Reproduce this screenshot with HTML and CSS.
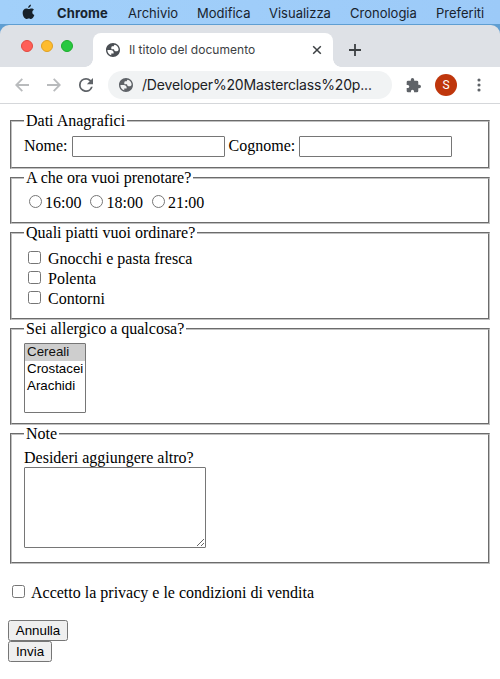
FILE: index.html
```html
<!DOCTYPE html>
<html lang="it">
<head>
<meta charset="utf-8">
<title>Il titolo del documento</title>
<link rel="stylesheet" href="styles.css">
</head>
<body>
<svg class="defs" width="0" height="0">
  <symbol id="globe" viewBox="0 0 24 24"><path d="M12 2C6.480 2 2 6.480 2 12s4.480 10 10 10 10-4.480 10-10S17.520 2 12 2zM4 12h4.400c3.400.020 4.900 1.730 4.500 5.140H9.500v2.480A8 8 0 0 1 4 12zm16 0c-.7 1.300-1.700 1.900-3.100 1.900-2.300 0-3.400-1-3.400-2.900h-3.900V8.500c0-1.300.8-2 2.300-2h1.200c0-1 .5-1.700 1.500-2.100A8 8 0 0 1 20 12z"/></symbol>
</svg>
<nav class="menubar">
  <svg class="apple" viewBox="0 0 14 17"><path d="M9.700.5c.1 1.900-1.300 3.500-3 3.600C6.500 2.400 8 .7 9.700.5zM12.900 6c-1.200.7-1.800 1.500-1.800 2.800 0 1.500.9 2.500 2.200 3-.8 2.200-2 4.200-3.500 4.200-.9 0-1.400-.6-2.500-.6s-1.700.6-2.500.6C2.600 16 .7 12.500.7 9.400c0-3 1.800-4.800 4-4.800 1 0 1.900.7 2.700.7.700 0 1.700-.7 2.900-.7 1 0 2 .5 2.600 1.400z"/></svg>
  <b class="m-chrome">Chrome</b><span class="m-archivio">Archivio</span><span class="m-modifica">Modifica</span><span class="m-visualizza">Visualizza</span><span class="m-cronologia">Cronologia</span><span class="m-preferiti">Preferiti</span>
</nav>
<div class="backdrop">
  <header class="tabstrip">
    <div class="lights"><i class="red"></i><i class="yellow"></i><i class="green"></i></div>
    <div class="tab">
      <svg class="favicon" viewBox="2 2 20 20"><use href="#globe" width="24" height="24"/></svg>
      <span class="tab-title">Il titolo del documento</span>
      <svg class="close" viewBox="0 0 10 10"><path d="M1.200 1.200l7.600 7.600M8.800 1.200L1.200 8.800"/></svg>
    </div>
    <svg class="plus" viewBox="0 0 12 12"><path d="M6 0v12M0 6h12"/></svg>
  </header>
</div>
<div class="toolbar">
  <svg class="arrow" viewBox="0 0 14 14"><path d="M14 7H1.500M7.300.8L1.200 7l6.100 6.200"/></svg>
  <svg class="arrow" viewBox="0 0 14 14"><path d="M0 7h12.500M6.700.8L12.800 7l-6.100 6.200"/></svg>
  <svg class="reload" viewBox="4 4 16 16"><path d="M17.650 6.350A7.950 7.950 0 0 0 12 4a8 8 0 1 0 7.730 10h-2.080A6 6 0 1 1 12 6c1.660 0 3.140.69 4.220 1.780L13 11h7V4z"/></svg>
  <div class="omnibox">
    <svg viewBox="2 2 20 20"><use href="#globe" width="24" height="24"/></svg>
    <span class="url">/Developer%20Masterclass%20p...</span>
  </div>
  <svg class="puzzle" viewBox="1 1 22 22"><path d="M20.500 11H19V7a2 2 0 0 0-2-2h-4V3.500a2.500 2.500 0 0 0-5 0V5H4a2 2 0 0 0-1.990 2v4.200H3.500a2.300 2.300 0 0 1 0 4.600H2V20a2 2 0 0 0 2 2h4.200v-1.500a2.300 2.300 0 0 1 4.600 0V22H17a2 2 0 0 0 2-2v-4h1.500a2.500 2.500 0 0 0 0-5z"/></svg>
  <span class="avatar">S</span>
  <svg class="dots" viewBox="0 0 4 14"><circle cx="2" cy="2" r="1.550"/><circle cx="2" cy="7" r="1.550"/><circle cx="2" cy="12" r="1.550"/></svg>
</div>
<form>
  <fieldset class="personal">
    <legend>Dati Anagrafici</legend>
    <div class="names"><label for="nome">Nome:</label><input id="nome" type="text"><label for="cognome">Cognome:</label><input id="cognome" type="text"></div>
  </fieldset>
  <fieldset class="time">
    <legend>A che ora vuoi prenotare?</legend>
    <div class="times"><label><input type="radio" name="ora">16:00</label><label><input type="radio" name="ora">18:00</label><label><input type="radio" name="ora">21:00</label></div>
  </fieldset>
  <fieldset class="dishes">
    <legend>Quali piatti vuoi ordinare?</legend>
    <label class="check"><input type="checkbox">Gnocchi e pasta fresca</label>
    <label class="check"><input type="checkbox">Polenta</label>
    <label class="check"><input type="checkbox">Contorni</label>
  </fieldset>
  <fieldset class="allergy">
    <legend>Sei allergico a qualcosa?</legend>
    <div class="listbox" role="listbox"><div class="selected">Cereali</div><div>Crostacei</div><div>Arachidi</div></div>
  </fieldset>
  <fieldset class="notes">
    <legend>Note</legend>
    <label class="notes-label" for="note">Desideri aggiungere altro?</label>
    <textarea id="note"></textarea>
  </fieldset>
  <label class="check privacy"><input type="checkbox">Accetto la privacy e le condizioni di vendita</label>
  <div class="buttons">
    <button type="reset" class="annulla">Annulla</button>
    <button type="button" class="invia">Invia</button>
  </div>
</form>
</body>
</html>
```
FILE: styles.css
```css
* { box-sizing: border-box; }
html, body { margin: 0; height: 679px; overflow: hidden; background: #fff; }
body { font: 16px/18px "Liberation Serif", serif; color: #000; }
svg { display: block; flex: none; }
.defs { position: absolute; }

.menubar { height: 24px; display: flex; align-items: center; padding: 1px 0 0 22px; background: linear-gradient(90deg, #a2d0fa, #9ccaf8); font: 13px/20px Inter, sans-serif; color: #18232e; white-space: nowrap; }
.apple { width: 13px; height: 16px; margin: -2px 22px 0 0; fill: #17212b; }
.m-chrome { width: 71px; font-weight: 700; letter-spacing: .1px; }
.m-archivio { width: 69px; }
.m-modifica { width: 72px; }
.m-visualizza { width: 81px; }
.m-cronologia { width: 86px; }

.backdrop { height: 43px; background: #5f9ed2; padding-top: 1px; }
.tabstrip { height: 42px; background: #dee1e6; border-radius: 9px 9px 0 0; display: flex; align-items: flex-start; }
.lights { width: 93px; display: flex; gap: 8px; padding: 15px 0 0 21px; }
.lights i { width: 12px; height: 12px; border-radius: 50%; border: 1px solid; }
.lights .red { background: #ff5f57; border-color: #e2493f; }
.lights .yellow { background: #febc2e; border-color: #dfa023; }
.lights .green { background: #28c840; border-color: #1dad2b; }
.tab { position: relative; width: 240px; height: 34px; margin-top: 8px; display: flex; align-items: center; padding: 0 11px 0 13px; background: #fff; border-radius: 8px 8px 0 0; }
.tab::before, .tab::after { content: ""; position: absolute; bottom: 0; width: 8px; height: 8px; }
.tab::before { left: -8px; background: radial-gradient(circle at 0 0, transparent 7.5px, #fff 8px); }
.tab::after { right: -8px; background: radial-gradient(circle at 100% 0, transparent 7.5px, #fff 8px); }
.favicon { width: 14px; height: 14px; fill: #4b4f54; }
.tab-title { font: 12px/18px Inter, sans-serif; letter-spacing: .03px; color: #3c4043; margin-left: 9px; white-space: nowrap; }
.close { width: 10px; height: 10px; margin-left: auto; stroke: #3c4043; stroke-width: 1.5; }
.plus { width: 12px; height: 12px; margin: 19px 0 0 16px; stroke: #3c4043; stroke-width: 1.800; }

.toolbar { height: 37px; display: flex; align-items: center; background: #fff; border-bottom: 1px solid #d5d7da; padding: 0 0 0 15px; }
.arrow { width: 14px; height: 14px; margin-right: 18px; fill: none; stroke: #b9bbbd; stroke-width: 1.800; }
.reload { width: 14px; height: 14px; fill: #5f6368; }
.omnibox { width: 284px; height: 28px; margin-left: 15px; border-radius: 14px; background: #f1f3f4; display: flex; align-items: center; padding-left: 11px; }
.omnibox svg { width: 14px; height: 14px; fill: #5f6368; }
.url { font: 14px/20px Inter, sans-serif; letter-spacing: -.17px; color: #202124; margin-left: 9px; white-space: nowrap; }
.puzzle { width: 15px; height: 15px; margin-left: 14px; fill: #5f6368; }
.avatar { width: 22px; height: 22px; margin-left: 14px; border-radius: 50%; background: #bf360c; color: #fff; font: 12px/22px Roboto, sans-serif; text-align: center; }
.dots { width: 4px; height: 14px; margin-left: 20px; fill: #5f6368; }

form { padding: 8px 8px 0; }
fieldset { margin: 0 2px; padding: 0 12px; border: 2px groove #c0c0c0; min-width: 0; }
legend { padding: 0 2px; height: 18px; }
input, textarea, button { font: 13.333px "Liberation Sans", sans-serif; }
.personal { height: 57px; }
.time { height: 55px; }
.dishes { height: 96px; }
.allergy { height: 105px; }
.notes { height: 139px; }
.names { display: flex; align-items: center; padding-top: 6px; white-space: nowrap; }
.names label { margin-top: -2px; }
input[type=text], textarea { border: 1px solid #767676; border-radius: 1px; background: #fff; }
input[type=text] { width: 153px; height: 21px; margin: 0 4px; padding: 1px 2px; }
.times { display: flex; gap: 9px; padding: 7px 0 0 5px; }
.times label { display: flex; line-height: 18px; }
input[type=radio], input[type=checkbox] { appearance: none; width: 13px; height: 13px; border: 1px solid #767676; background: #fff; margin: 0; flex: none; }
input[type=radio] { border-radius: 50%; margin: 1px 3px 0 0; }
input[type=checkbox] { border-radius: 2.500px; margin: 2px 7px 0 4px; }
.check { display: flex; height: 20px; line-height: 20px; }
.dishes .check { position: relative; top: 1px; }
.dishes { padding-top: 6px; }
.listbox { width: 62px; height: 70px; margin-top: 5px; border: 1px solid #767676; border-radius: 1px; font: 13.333px/15px "Liberation Sans", sans-serif; }
.listbox div { padding-left: 2px; height: 17px; }
.listbox .selected { background: #cecece; color: #101010; }
.notes-label { display: block; margin-top: 6px; }
textarea { display: block; width: 182px; height: 81px; padding: 2px; resize: both; }
.privacy { margin-top: 19px; }
.privacy input[type=checkbox] { margin-right: 6px; }
.buttons { display: flex; flex-direction: column; align-items: flex-start; margin-top: 17px; }
button { height: 21px; padding: 0; border: 1px solid #767676; border-radius: 2.500px; background: #efefef; color: #000; }
.annulla { width: 60px; }
.invia { width: 44px; }
```
